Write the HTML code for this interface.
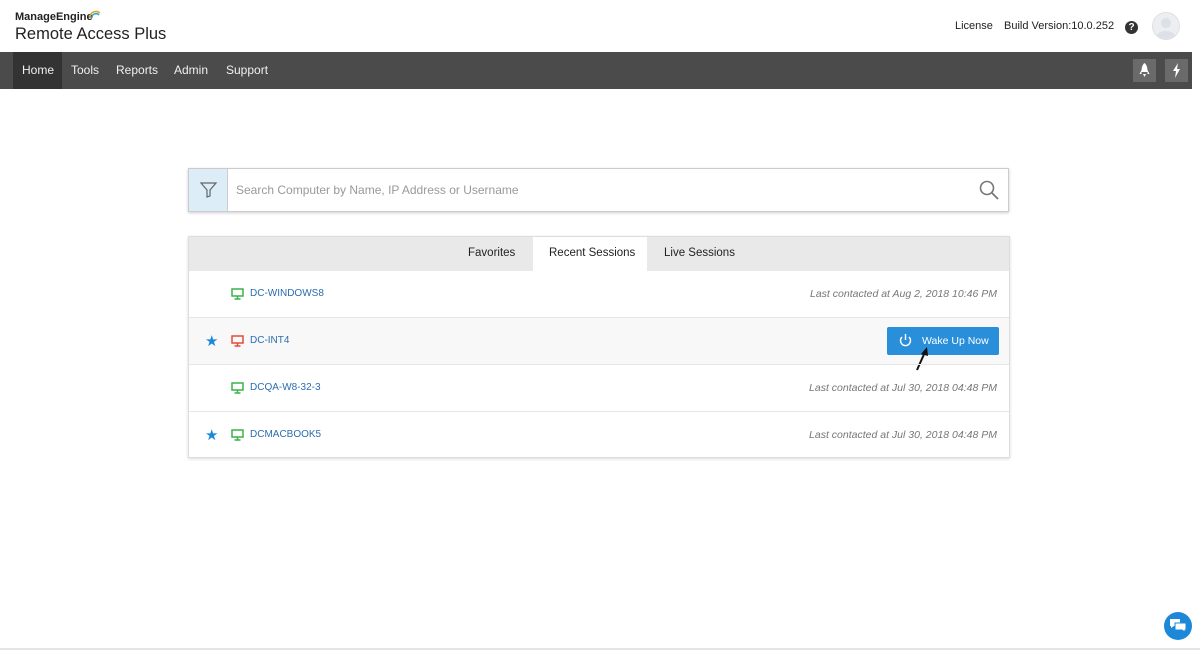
<!DOCTYPE html>
<html><head><style>
*{box-sizing:border-box;margin:0;padding:0}
body{width:1200px;height:650px;background:#fff;font-family:"Liberation Sans",sans-serif;position:relative;overflow:hidden;color:#333}
.abs{position:absolute}
.nav{left:0;top:52px;width:1192px;height:37px;background:#4b4b4b}
.nav span{position:absolute;top:0;height:37px;line-height:36px;color:#f0f0f0;font-size:12px}
.row{position:absolute;left:0;width:820px;height:47px;border-top:1px solid #e6e6e6}
.name{position:absolute;left:61px;top:17px;font-size:10px;color:#2a6db0}
.mon{position:absolute;left:42px;top:17px}
.date{position:absolute;right:12px;top:17px;font-size:10.5px;font-style:italic;color:#777}
.star{position:absolute;left:16px;top:14px;color:#1e88d8;font-size:15px}
</style></head><body>
<div class="abs" style="left:15px;top:11px;font-size:11px;font-weight:bold;color:#222">ManageEngine</div>
<svg class="abs" style="left:88px;top:9px" width="14" height="10"><path d="M2 9 A6 6 0 0 1 12 4" stroke="#e7a11b" stroke-width="1.5" fill="none"/><path d="M4 9 A4 4 0 0 1 11 6" stroke="#2aa3db" stroke-width="1.5" fill="none"/></svg>
<div class="abs" style="left:15px;top:25px;font-size:16.5px;color:#222">Remote Access Plus</div>
<div class="abs" style="left:955px;top:20px;font-size:11px;color:#222">License</div>
<div class="abs" style="left:1004px;top:20px;font-size:11px;color:#222">Build Version:10.0.252</div>
<div class="abs" style="left:1125px;top:21px;width:13px;height:13px;border-radius:50%;background:#333;color:#fff;font-size:10px;font-weight:bold;text-align:center;line-height:13px">?</div>
<div class="abs" style="left:1152px;top:12px;width:28px;height:28px;border-radius:50%;background:#eceef2;border:1px solid #e0e0e0;overflow:hidden"><svg width="28" height="28"><circle cx="13" cy="10" r="5" fill="#dde0e6"/><ellipse cx="13" cy="25" rx="10" ry="7" fill="#dde0e6"/></svg></div>
<div class="abs nav">
<div class="abs" style="left:13px;top:0;width:49px;height:37px;background:#333"></div>
<span style="left:22px">Home</span><span style="left:71px">Tools</span><span style="left:116px">Reports</span><span style="left:174px">Admin</span><span style="left:226px">Support</span>
<div class="abs" style="left:1133px;top:7px;width:23px;height:23px;background:#6a6a6a"><svg width="23" height="23"><path d="M11.5 4C9 6 8.5 9 8.5 13H14.5C14.5 9 14 6 11.5 4Z" fill="#fff"/><path d="M8.5 11L6.5 15H8.5ZM14.5 11L16.5 15H14.5Z" fill="#fff"/><path d="M10 15H13L11.5 18Z" fill="#fff"/></svg></div>
<div class="abs" style="left:1165px;top:7px;width:23px;height:23px;background:#6a6a6a"><svg width="23" height="23"><path d="M13 4L8 12H11L10 19L15 10H12Z" fill="#fff"/></svg></div>
</div>
<div class="abs" style="left:188px;top:168px;width:821px;height:44px;border:1px solid #ccc;box-shadow:0 1px 3px rgba(0,0,0,.2)">
<div class="abs" style="left:0;top:0;width:39px;height:42px;background:#dcedf7;border-right:1px solid #ccc"></div>
<svg class="abs" style="left:11px;top:13px" width="17" height="16"><path d="M1 1H16L10 8V14L7 15V8Z" fill="none" stroke="#666" stroke-width="1.2"/></svg>
<div class="abs" style="left:47px;top:14px;font-size:12px;color:#999">Search Computer by Name, IP Address or Username</div>
<svg class="abs" style="left:790px;top:11px" width="20" height="20"><circle cx="8" cy="8" r="6.5" fill="none" stroke="#777" stroke-width="1.6"/><path d="M13 13L19 19" stroke="#777" stroke-width="1.8"/></svg>
</div>
<div class="abs" style="left:188px;top:236px;width:822px;height:222px;border:1px solid #ddd;box-shadow:0 1px 3px rgba(0,0,0,.15)">
<div class="abs" style="left:0;top:0;width:820px;height:34px;background:#e9e9e9"></div>
<div class="abs" style="left:344px;top:0;width:114px;height:35px;background:#fff"></div>
<div class="abs" style="left:279px;top:10px;font-size:11.5px;color:#222">Favorites</div>
<div class="abs" style="left:360px;top:10px;font-size:11.5px;color:#222">Recent Sessions</div>
<div class="abs" style="left:475px;top:10px;font-size:11.5px;color:#222">Live Sessions</div>
<div class="row" style="top:34px;border-top:none"><svg class="mon" width="13" height="12"><rect x="1" y="1" width="11" height="7" fill="none" stroke="#3ab24a" stroke-width="1.5"/><path d="M6.5 8V11M3.5 11H9.5" stroke="#3ab24a" stroke-width="1.5"/></svg><div class="name">DC-WINDOWS8</div><div class="date">Last contacted at Aug 2, 2018 10:46 PM</div></div>
<div class="row" style="top:80px;background:#f8f8f8"><div class="star">★</div><svg class="mon" width="13" height="12"><rect x="1" y="1" width="11" height="7" fill="none" stroke="#e54b3c" stroke-width="1.5"/><path d="M6.5 8V11M3.5 11H9.5" stroke="#e54b3c" stroke-width="1.5"/></svg><div class="name">DC-INT4</div>
<div class="abs" style="left:698px;top:9px;width:112px;height:28px;background:#2a8fdb;border-radius:2px;color:#fff;font-size:10.5px;line-height:28px;padding-left:35px">Wake Up Now</div>
<svg class="abs" style="left:709px;top:15px" width="15" height="15"><path d="M4 4A5 5 0 1 0 11 4" fill="none" stroke="#fff" stroke-width="1.4"/><path d="M7.5 1V7" stroke="#fff" stroke-width="1.4"/></svg>
<svg class="abs" style="left:726px;top:28px" width="16" height="26"><path d="M2 24L10 6" stroke="#111" stroke-width="2"/><path d="M12 1L6 8L13 10Z" fill="#111"/></svg>
</div>
<div class="row" style="top:127px"><svg class="mon" width="13" height="12"><rect x="1" y="1" width="11" height="7" fill="none" stroke="#3ab24a" stroke-width="1.5"/><path d="M6.5 8V11M3.5 11H9.5" stroke="#3ab24a" stroke-width="1.5"/></svg><div class="name">DCQA-W8-32-3</div><div class="date">Last contacted at Jul 30, 2018 04:48 PM</div></div>
<div class="row" style="top:174px"><div class="star">★</div><svg class="mon" width="13" height="12"><rect x="1" y="1" width="11" height="7" fill="none" stroke="#3ab24a" stroke-width="1.5"/><path d="M6.5 8V11M3.5 11H9.5" stroke="#3ab24a" stroke-width="1.5"/></svg><div class="name">DCMACBOOK5</div><div class="date">Last contacted at Jul 30, 2018 04:48 PM</div></div>
</div>
<div class="abs" style="left:1164px;top:612px;width:28px;height:28px;border-radius:50%;background:#1e88d8"></div>
<svg class="abs" style="left:1169px;top:618px" width="18" height="16"><path d="M1 1H11V8H5L2 10V8H1Z" fill="#fff"/><path d="M6 5H17V12H16V14L13 12H6Z" fill="#fff" stroke="#1e88d8"/></svg>
<div class="abs" style="left:0;top:648px;width:1200px;height:2px;background:#e5e5e5"></div>
</body></html>
